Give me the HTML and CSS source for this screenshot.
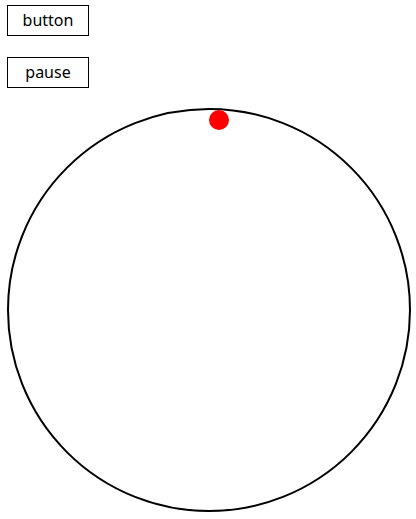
FILE: index.html
```html
<!DOCTYPE html>
<html lang="en">
<head>
    <title>Circle</title>
    <link rel="stylesheet" href="styles.css">
</head>
<body>
    <div class="controls">
        <button class="btn" id="start">button</button>
        <button class="btn" id="pause">pause</button>
    </div>

    <div class="ring">
        <div class="ball"></div>
    </div>
</body>
</html>
```
FILE: styles.css
```css
body{
    margin: 0;
    padding: 5px 7px;
    background-color: #fff;
    font-family: "Noto Sans", "Open Sans", sans-serif;
}
.controls{
    display: flex;
    flex-direction: column;
    align-items: flex-start;
    gap: 21px;
}
.btn{
    width: 82px;
    height: 31px;
    padding: 0;
    margin: 0;
    background-color: #fff;
    border: 1px solid #000;
    color: #000;
    font-family: inherit;
    font-size: 16px;
    line-height: 29px;
}
.ring{
    position: relative;
    width: 400px;
    height: 400px;
    margin-top: 20px;
    border: 2px solid #000;
    border-radius: 50%;
}
.ball{
    position: absolute;
    left: 200px;
    top: 0;
    width: 20px;
    height: 20px;
    border-radius: 50%;
    background-color: #f00;
}
```
